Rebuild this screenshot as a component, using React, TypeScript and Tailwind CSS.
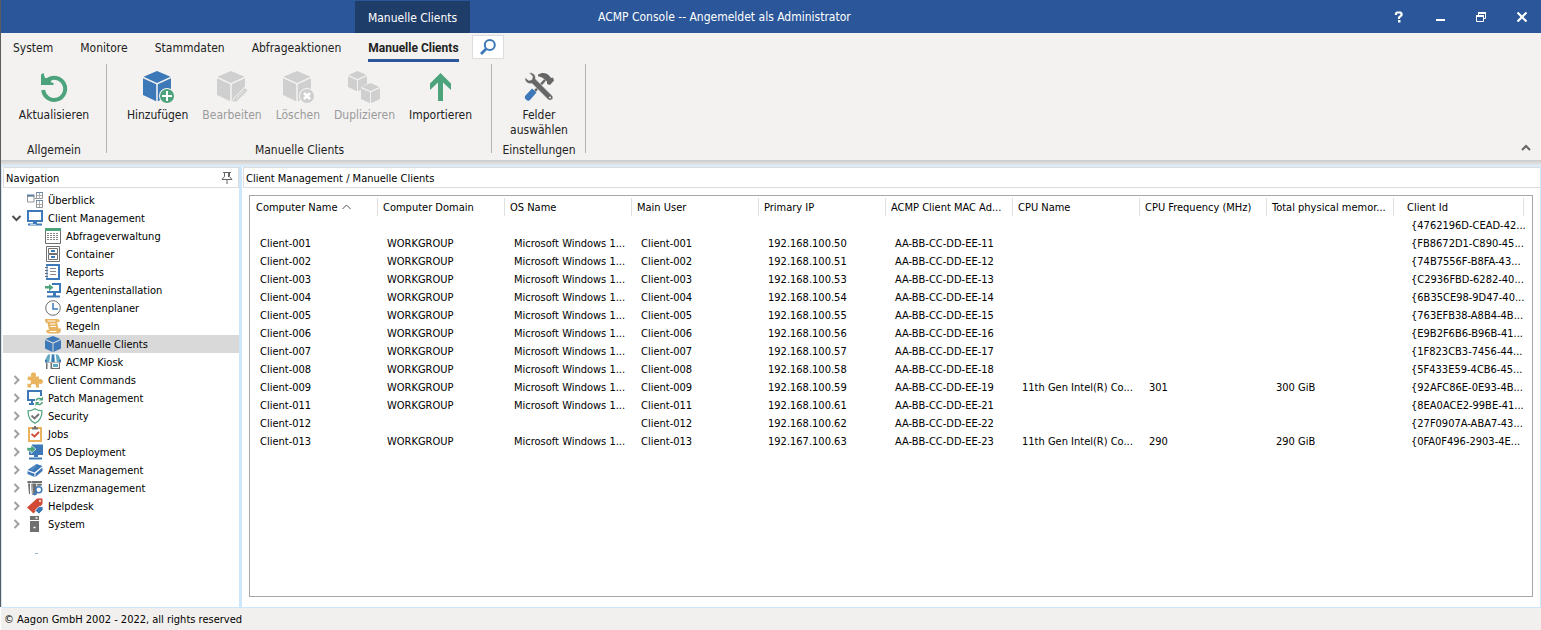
import { useState, type ReactNode } from "react";

const columns = [
  "Computer Name",
  "Computer Domain",
  "OS Name",
  "Main User",
  "Primary IP",
  "ACMP Client MAC Ad...",
  "CPU Name",
  "CPU Frequency (MHz)",
  "Total physical memor...",
  "Client Id",
];

const WG = "WORKGROUP";
const WIN = "Microsoft Windows 1...";
const CPU = "11th Gen Intel(R) Co...";

const clients = [
  ["", "", "", "", "", "", "", "", "", "{4762196D-CEAD-42..."],
  ["Client-001", WG, WIN, "Client-001", "192.168.100.50", "AA-BB-CC-DD-EE-11", "", "", "", "{FB8672D1-C890-45..."],
  ["Client-002", WG, WIN, "Client-002", "192.168.100.51", "AA-BB-CC-DD-EE-12", "", "", "", "{74B7556F-B8FA-43..."],
  ["Client-003", WG, WIN, "Client-003", "192.168.100.53", "AA-BB-CC-DD-EE-13", "", "", "", "{C2936FBD-6282-40..."],
  ["Client-004", WG, WIN, "Client-004", "192.168.100.54", "AA-BB-CC-DD-EE-14", "", "", "", "{6B35CE98-9D47-40..."],
  ["Client-005", WG, WIN, "Client-005", "192.168.100.55", "AA-BB-CC-DD-EE-15", "", "", "", "{763EFB38-A8B4-4B..."],
  ["Client-006", WG, WIN, "Client-006", "192.168.100.56", "AA-BB-CC-DD-EE-16", "", "", "", "{E9B2F6B6-B96B-41..."],
  ["Client-007", WG, WIN, "Client-007", "192.168.100.57", "AA-BB-CC-DD-EE-17", "", "", "", "{1F823CB3-7456-44..."],
  ["Client-008", WG, WIN, "Client-008", "192.168.100.58", "AA-BB-CC-DD-EE-18", "", "", "", "{5F433E59-4CB6-45..."],
  ["Client-009", WG, WIN, "Client-009", "192.168.100.59", "AA-BB-CC-DD-EE-19", CPU, "301", "300 GiB", "{92AFC86E-0E93-4B..."],
  ["Client-011", WG, WIN, "Client-011", "192.168.100.61", "AA-BB-CC-DD-EE-21", "", "", "", "{8EA0ACE2-99BE-41..."],
  ["Client-012", "", "", "Client-012", "192.168.100.62", "AA-BB-CC-DD-EE-22", "", "", "", "{27F0907A-ABA7-43..."],
  ["Client-013", WG, WIN, "Client-013", "192.167.100.63", "AA-BB-CC-DD-EE-23", CPU, "290", "290 GiB", "{0FA0F496-2903-4E..."],
];

const BLUE = "#3d78b8";
const GREEN = "#4ca37c";
const GREY = "#707070";
const SAND = "#e9b35f";
const RED = "#d04a35";

function Svg({ children }: { children: ReactNode }) {
  return (
    <svg viewBox="0 0 16 16" className="h-4 w-4 shrink-0" fill="none">
      {children}
    </svg>
  );
}

function BigSvg({ children }: { children: ReactNode }) {
  return (
    <svg viewBox="0 0 32 32" className="h-8 w-8" fill="none">
      {children}
    </svg>
  );
}

const icons: Record<string, ReactNode> = {
  overview: (
    <Svg>
      <path d="M0.5 4h6.5v6H0.5z" stroke="#8f9499" />
      <path d="M0 3.5h7.5" stroke="#5f7f9f" strokeWidth="2" />
      <path d="M7.5 6.5h2" stroke="#8f9499" />
      <path d="M9.5 0.5h6v6h-6zM9.5 8.5h6v7h-6z" stroke="#8f9499" />
      <path d="M12.5 1v6M9.5 3.5h6M12.5 9v6M9.5 12.5h6" stroke="#a9adb1" />
      <path d="M9 0.5h7M9 8.5h7" stroke="#6d8ba8" />
    </Svg>
  ),
  monitor: (
    <Svg>
      <path d="M1 1h14v10H1z" stroke={BLUE} strokeWidth="2" />
      <path d="M6 12h4v2H6z" fill={BLUE} />
      <path d="M1 14.5h14" stroke={BLUE} strokeWidth="2" />
      <path d="M3 14.5h6" stroke="#b5cce4" />
    </Svg>
  ),
  query: (
    <Svg>
      <path d="M0.5 1h15v14.5H0.5z" stroke={GREY} fill="#fff" />
      <path d="M0 0h16v3H0z" fill={GREEN} />
      <path d="M2 5.5h12M2 7.5h12M2 9.5h12M2 11.5h12" stroke="#858585" strokeDasharray="2 1" />
    </Svg>
  ),
  container: (
    <Svg>
      <path d="M1.5 0.5h13v15h-13z" stroke={GREY} />
      <path d="M3.5 2.500h9v5h-9zM3.5 8.500h9v5h-9z" stroke={GREY} />
      <path d="M6 5h4M6 11h4" stroke={BLUE} strokeWidth="2" />
    </Svg>
  ),
  reports: (
    <Svg>
      <path d="M2 1h12v14H2z" stroke={BLUE} strokeWidth="2" />
      <path d="M0 3.500h3M0 6.500h3M0 9.500h3M0 12.500h3" stroke="#fff" strokeWidth="2" />
      <path d="M0 3.500h3M0 6.500h3M0 9.500h3M0 12.500h3" stroke="#6a6f75" />
      <path d="M5 4.500h6M5 7.500h6M5 10.500h6" stroke="#8a8a8a" />
    </Svg>
  ),
  install: (
    <Svg>
      <path d="M7 2h8v8H3V9" stroke={BLUE} strokeWidth="2" />
      <path d="M8 11h3v3H8z" fill={BLUE} />
      <path d="M2 14.500h13" stroke={BLUE} strokeWidth="2" />
      <path d="M0 4h4V2l4.500 3.500L4 9V6.500H0z" fill={GREEN} />
    </Svg>
  ),
  planner: (
    <Svg>
      <circle cx="8" cy="8" r="7.300" stroke={GREY} fill="#fff" />
      <path d="M8 3v6h5" stroke={BLUE} strokeWidth="1.500" />
    </Svg>
  ),
  rules: (
    <Svg>
      <path d="M0 1h12c2 0 3 1 2.500 3H12l1.500 6.500H16c0 3-1 5-3 5H3.500C1.500 15.500 1 13 1.500 12H4L2.500 5H1C0 4 0 2 0 1z" fill={SAND} />
      <path d="M2.500 3h8M5 6h5.500M5.500 8.500h5.500M4.500 13.500h7" stroke="#fff" />
    </Svg>
  ),
  cube: (
    <Svg>
      <path d="M8 0l7.500 3L8 6.500 0.500 3z" fill={BLUE} />
      <path d="M0 4l7.500 3.500V16L0 12.500zM16 4L8.500 7.500V16l7.500-3.500z" fill={BLUE} />
    </Svg>
  ),
  kiosk: (
    <Svg>
      <path d="M3 0.500h10L16 6v2H0V6z" fill="#63a9c2" />
      <path d="M6 0.500L5 8M10 0.500L11 8" stroke="#fff" strokeWidth="1.500" />
      <path d="M8 0.500V8M1 6v2.500M15 6v2.500" stroke={BLUE} strokeWidth="2" />
      <path d="M1 8.500h14V15H1z" fill={GREY} />
      <path d="M2.500 9h3v6h-3z" fill="#fff" />
      <path d="M7.500 9.500h6v4h-6z" fill="#5aa9c4" stroke="#fff" />
    </Svg>
  ),
  puzzle: (
    <Svg>
      <path
        d="M1 4.500h3.500C3 2 4.500 0.500 6.500 0.500s3.500 1.500 2 4H12v3c2-1 4 0 4 2s-2 3-4 2v4H8.500C10 13.500 8.500 12 6.500 12s-3.500 1.500-2 3.500H0.500v-4c2 1.200 3.500 0 3.500-1.500S2.500 7.500 0.500 8.500z"
        fill={SAND}
      />
    </Svg>
  ),
  patch: (
    <Svg>
      <path d="M8 10H1V1h13v5" stroke={BLUE} strokeWidth="2" />
      <path d="M5 10.500v4M2 14h5" stroke={BLUE} strokeWidth="2" />
      <path d="M9 10.500c1-2.500 4-2.500 5.500-1M15.500 12c-1 3-4 3-5.500 1.500" stroke={GREEN} strokeWidth="1.500" />
      <path d="M16 6.500v4h-4zM8.500 16v-4h4z" fill={GREEN} />
    </Svg>
  ),
  shield: (
    <Svg>
      <path d="M8 0.800c2 1.400 4.500 2 7 2 0 6-1.500 10-7 12.500C2.500 12.800 1 8.800 1 2.800c2.500 0 5-0.600 7-2z" stroke={GREEN} fill="#fff" strokeWidth="1.200" />
      <path d="M4.500 7.500l3 3L12 6" stroke={GREY} strokeWidth="1.800" />
    </Svg>
  ),
  jobs: (
    <Svg>
      <path d="M2 2h12v13H2z" stroke={SAND} strokeWidth="2" fill="#fff" />
      <path d="M5 3.500V1.500h2V0h2v1.500h2v2z" fill={GREY} />
      <path d="M4.500 8l3 2.500L12 6" stroke={RED} strokeWidth="1.800" />
    </Svg>
  ),
  deploy: (
    <Svg>
      <path d="M5 0.500h11v10.500H2V7h3z" fill={BLUE} />
      <path d="M7 11h4v2H7zM2 13.500h13v2H2z" fill={BLUE} />
      <path d="M0 3.500h4V1l5 4.200L4 9.500V7H0z" fill={GREEN} stroke="#fff" strokeWidth="0.600" />
    </Svg>
  ),
  asset: (
    <Svg>
      <path d="M0.500 8L9.500 2 15.500 4 7.500 10.500z" fill={BLUE} />
      <path d="M0.500 9.200L7.500 11.700v3.300L0.500 12zM8.500 11.500L15.500 5.500v3.500L8.500 15z" fill={BLUE} />
      <path d="M4 8l5-4" stroke="#7ba6d3" />
    </Svg>
  ),
  license: (
    <Svg>
      <path d="M0.500 1h14.500v2H0.500zM1 3.500h2V14H2zM4 3.500h5.500V15H5z" fill={GREY} />
      <path d="M4.500 1l1.500 14M10 3.500h5V6h-5z" stroke="#fff" strokeWidth="0.500" fill={GREY} />
      <circle cx="11.800" cy="9.700" r="3" stroke={BLUE} strokeWidth="1.500" fill="#fff" />
      <path d="M9.800 12L7 15" stroke={BLUE} strokeWidth="2" />
    </Svg>
  ),
  helpdesk: (
    <Svg>
      <path d="M10 0.500h5.500V6L6.500 15.500 0 9.500z" fill={RED} />
      <circle cx="13" cy="3" r="1" fill="#fff" />
      <path d="M12 8.500h4V12l-4 4-4-3.500z" fill={BLUE} stroke="#fff" strokeWidth="0.800" />
    </Svg>
  ),
  server: (
    <Svg>
      <path d="M3 0h9v4H3zM3 5h9v11H3z" fill={GREY} />
      <path d="M8.500 2h2M6.500 11.500h2" stroke="#fff" strokeWidth="1.500" />
    </Svg>
  ),
};

const tree = [
  { label: "Überblick", icon: "overview", level: 0 },
  { label: "Client Management", icon: "monitor", level: 0, open: true },
  { label: "Abfrageverwaltung", icon: "query", level: 1 },
  { label: "Container", icon: "container", level: 1 },
  { label: "Reports", icon: "reports", level: 1 },
  { label: "Agenteninstallation", icon: "install", level: 1 },
  { label: "Agentenplaner", icon: "planner", level: 1 },
  { label: "Regeln", icon: "rules", level: 1 },
  { label: "Manuelle Clients", icon: "cube", level: 1 },
  { label: "ACMP Kiosk", icon: "kiosk", level: 1 },
  { label: "Client Commands", icon: "puzzle", level: 0, open: false },
  { label: "Patch Management", icon: "patch", level: 0, open: false },
  { label: "Security", icon: "shield", level: 0, open: false },
  { label: "Jobs", icon: "jobs", level: 0, open: false },
  { label: "OS Deployment", icon: "deploy", level: 0, open: false },
  { label: "Asset Management", icon: "asset", level: 0, open: false },
  { label: "Lizenzmanagement", icon: "license", level: 0, open: false },
  { label: "Helpdesk", icon: "helpdesk", level: 0, open: false },
  { label: "System", icon: "server", level: 0, open: false },
];

function CubeShape({ color }: { color: string }) {
  return (
    <>
      <path d="M15 0l13.500 5.800L15 12 1.500 5.800z" fill={color} />
      <path d="M1 7.200l13.200 6v17L1 24zM29 7.200l-13.200 6v17L29 24z" fill={color} />
    </>
  );
}

function RefreshIcon() {
  return (
    <BigSvg>
      <path d="M9 9.500A11 11 0 1 1 5.200 19" stroke={GREEN} strokeWidth="4" />
      <path d="M3 14V3.500L5.500 2l1.500 5 8.500-0.500-3 4.500 3 1v2z" fill={GREEN} />
    </BigSvg>
  );
}

function AddIcon() {
  return (
    <BigSvg>
      <CubeShape color={BLUE} />
      <circle cx="25" cy="25" r="8" fill="#f3f2f1" />
      <circle cx="25" cy="25" r="7" fill={GREEN} />
      <path d="M25 20v10M20 25h10" stroke="#fff" strokeWidth="2" />
    </BigSvg>
  );
}

function EditIcon() {
  return (
    <BigSvg>
      <CubeShape color="#cfcfcf" />
      <path d="M16 32l1.500-5L29 15.500l4 4L21 31z" fill="#f3f2f1" />
      <path d="M17 31l1.500-4L29 17l2.500 2.500L21 30z" fill="#cfcfcf" />
      <path d="M20 28l8-8" stroke="#f3f2f1" strokeWidth="0.800" />
    </BigSvg>
  );
}

function DeleteIcon() {
  return (
    <BigSvg>
      <CubeShape color="#cfcfcf" />
      <circle cx="25" cy="25" r="8" fill="#f3f2f1" />
      <circle cx="25" cy="25" r="7" fill="#cfcfcf" />
      <path d="M22 22l6 6M28 22l-6 6" stroke="#fff" strokeWidth="2.500" />
    </BigSvg>
  );
}

function DuplicateIcon() {
  return (
    <BigSvg>
      <path d="M9.500 0L18.500 4 9.500 8 0.500 4z" fill="#cfcfcf" />
      <path d="M0 5.200l9 4v11L0 16zM19 5.200l-9 4v11l3-1.400V16l6-3z" fill="#cfcfcf" />
      <path d="M22.500 12L31.500 16l-9 4-9-4z" fill="#cfcfcf" />
      <path d="M13 17.200l9 4v11L13 28zM32 17.200l-9 4v11L32 28z" fill="#cfcfcf" />
    </BigSvg>
  );
}

function ImportIcon() {
  return (
    <BigSvg>
      <path d="M15.500 2L26 12.500V19l-8-7.500V30h-5V11.500L5 19v-6.500z" fill={GREEN} />
    </BigSvg>
  );
}

function ToolsIcon() {
  return (
    <BigSvg>
      <path d="M22 9L12 20" stroke="#666" strokeWidth="2.500" />
      <path d="M15 3.500C19 1 24 1.500 26.500 5l1.500 2 2-0.500 1 3-4 4.500-3-1 0-2.500-3.500-3c-2-1.500-4-2-5.500-2z" fill="#666" />
      <path d="M2.500 24.500l6.500-7 4.500 4-6.500 7.500c-1 1-2.500 1-3.500 0l-1-1c-1-1-1-2.500 0-3.500z" fill={BLUE} />
      <path
        d="M6 2c4-1 7 2 6.500 6L29 24.500c1.500 1.500 1 3 0 4s-3 1-4 0L9 12.500C5 13.500 1.500 10.500 2 6.500l4 3 3-1 0.500-3.500z"
        fill="#666"
        stroke="#f3f2f1"
        strokeWidth="0.600"
      />
      <circle cx="27" cy="26.500" r="1" fill="#f3f2f1" />
    </BigSvg>
  );
}

type Action = { label: string; icon: ReactNode; disabled?: boolean };

function RibbonGroup({ title, actions, width }: { title: string; actions: Action[]; width: string }) {
  return (
    <section aria-label={title} className={`flex ${width} items-start`}>
      <div className="flex h-[94px] flex-1 flex-col items-center justify-between pl-px">
        <div className="flex items-start">
          {actions.map((a) => (
            <button
              key={a.label}
              disabled={a.disabled}
              className="flex flex-col items-center gap-[5px] px-[7px] pt-[7px] leading-[15px] whitespace-pre-line disabled:text-[#9a9a9a]"
            >
              {a.icon}
              <span>{a.label}</span>
            </button>
          ))}
        </div>
        <h2 className="leading-[15px]">{title}</h2>
      </div>
      <div className="h-[89px] w-px bg-[#b5b3b1]" />
    </section>
  );
}

const tabs = ["System", "Monitore", "Stammdaten", "Abfrageaktionen", "Manuelle Clients"];

export default function App() {
  const [selected, setSelected] = useState("Manuelle Clients");
  const [tab, setTab] = useState("Manuelle Clients");

  return (
    <div className="flex min-h-screen flex-col bg-white font-['DejaVu_Sans_Condensed','DejaVu_Sans',sans-serif] text-[11px] leading-4 text-black">
      <div className="flex flex-1 flex-col border-l border-[#5c5c5c]">
        {/* title bar */}
        <header className="flex h-[33px] items-center bg-[#2b579a] text-xs text-white">
          <div className="mt-px ml-[354px] flex h-8 w-[115px] items-center justify-center bg-[#1f3d69]">
            <span className="pt-[2px]">Manuelle Clients</span>
          </div>
          <h1 className="ml-32 flex-1">ACMP Console -- Angemeldet als Administrator</h1>
          <div className="mr-px flex gap-1">
            <button aria-label="Hilfe" className="flex h-8 w-[37px] items-center justify-center">
              <svg viewBox="0 0 10 12" className="h-3 w-[10px]" fill="none">
                <path d="M2 4V2.500L3 1.500h3.500L7.500 2.500v1.800L5 6.500V8" stroke="#fff" strokeWidth="2.200" />
                <path d="M4 9h2.500v2.500H4z" fill="#fff" />
              </svg>
            </button>
            <button aria-label="Minimieren" className="flex h-8 w-[37px] items-center justify-center">
              <svg viewBox="0 0 10 10" className="h-[10px] w-[10px]">
                <path d="M1 7h9v2H1z" fill="#fff" />
              </svg>
            </button>
            <button aria-label="Wiederherstellen" className="flex h-8 w-[37px] items-center justify-center">
              <svg viewBox="0 0 10 10" className="h-[10px] w-[10px]" fill="none" stroke="#fff">
                <path d="M0.500 4v5.500h7V4M2.500 3V1h7v5.500H8" />
                <path d="M0 4h8M2 1h8" strokeWidth="2" />
              </svg>
            </button>
            <button aria-label="Schließen" className="flex h-8 w-[37px] items-center justify-center">
              <svg viewBox="0 0 10 10" className="h-[10px] w-[10px]" fill="none" stroke="#fff" strokeWidth="2.200">
                <path d="M0.500 0.500l9 9M9.500 0.500l-9 9" />
              </svg>
            </button>
          </div>
        </header>

        {/* ribbon */}
        <div className="bg-[#f3f2f1] text-xs text-[#222]">
          <nav className="flex h-[31px] items-start gap-[27px] pl-3">
            {tabs.map((t) => (
              <button
                key={t}
                onClick={() => setTab(t)}
                className={
                  t === tab
                    ? "h-[29px] border-b-[3px] border-[#2b579a] pt-1 font-[Roboto,sans-serif] font-bold"
                    : "h-[29px] border-b-[3px] border-transparent pt-1"
                }
              >
                {t}
              </button>
            ))}
            <button
              aria-label="Suchen"
              className="-ml-[14px] mt-[2px] flex h-6 w-8 items-center justify-center border border-[#dcdcdc] bg-white"
            >
              <svg viewBox="0 0 16 16" className="h-4 w-4" fill="none" stroke={BLUE}>
                <circle cx="9.800" cy="6" r="5" strokeWidth="2" />
                <path d="M6 10l-5 5" strokeWidth="2.800" />
              </svg>
            </button>
          </nav>
          <div className="flex h-24 items-start">
            <RibbonGroup title="Allgemein" width="w-[106px]" actions={[{ label: "Aktualisieren", icon: <RefreshIcon /> }]} />
            <RibbonGroup
              title="Manuelle Clients"
              width="w-[385px]"
              actions={[
                { label: "Hinzufügen", icon: <AddIcon /> },
                { label: "Bearbeiten", icon: <EditIcon />, disabled: true },
                { label: "Löschen", icon: <DeleteIcon />, disabled: true },
                { label: "Duplizieren", icon: <DuplicateIcon />, disabled: true },
                { label: "Importieren", icon: <ImportIcon /> },
              ]}
            />
            <RibbonGroup title="Einstellungen" width="w-[94px]" actions={[{ label: "Felder\nauswählen", icon: <ToolsIcon /> }]} />
            <button aria-label="Menüband ausblenden" className="mr-[10px] ml-auto self-end pb-2">
              <svg viewBox="0 0 10 8" className="h-2 w-[10px]" fill="none">
                <path d="M1 6l4-4 4 4" stroke="#666" strokeWidth="2" />
              </svg>
            </button>
          </div>
        </div>
        <div className="h-[5px] bg-linear-to-b from-[#cbcbcb] to-[#e6e6e6]" />

        <div className="flex flex-1 border-t-2 border-[#d9ecfb]">
          {/* navigation */}
          <aside className="w-[241px] border-r-[3px] border-l border-[#cce6fb]">
            <div className="ml-px flex h-[21px] items-center justify-between border border-[#dcdcdc] pr-[5px] pl-[2px]">
              <h2 className="pt-[2px]">Navigation</h2>
              <button aria-label="Navigation anheften">
                <svg viewBox="0 0 12 12" className="h-3 w-3" fill="none" stroke="#666">
                  <path d="M2 0.500h8M3.500 1v3.500M8.500 1v3.500M7.500 1v4M3.500 4.500l-2.500 3h10l-2.500-3M6 8v4" />
                </svg>
              </button>
            </div>
            <ul className="ml-px pt-[3px]">
              {tree.map((n) => (
                <li key={n.label}>
                  <button
                    onClick={() => setSelected(n.label)}
                    className={`flex h-[18px] w-full items-center gap-[5px] ${n.level ? "pl-[42px]" : "pl-2"} ${
                      selected === n.label ? "bg-[#d9d9d9]" : ""
                    }`}
                  >
                    {n.level === 0 && (
                      <svg viewBox="0 0 11 11" className="h-[11px] w-[11px]" fill="none" strokeWidth="2">
                        {n.open === true && <path d="M1.500 3l4 4 4-4" stroke="#505050" />}
                        {n.open === false && <path d="M3.500 1l4 4-4 4" stroke="#a0a0a0" />}
                      </svg>
                    )}
                    {icons[n.icon]}
                    <span className="pt-[2px]">{n.label}</span>
                  </button>
                </li>
              ))}
            </ul>
            <div className="mt-5 ml-[33px] h-px w-[3px] bg-[#9db8cc]" />
          </aside>

          {/* content */}
          <main className="flex flex-1 flex-col border-r border-[#cce6fb]">
            <h2 className="ml-px flex h-[21px] items-center border border-r-0 border-[#dcdcdc] pt-[2px] pl-[2px]">
              Client Management / Manuelle Clients
            </h2>
            <div className="mt-[7px] mr-[7px] mb-[10px] ml-[7px] flex-1 border border-[#a7a6ab] pr-2">
              <table className="w-full table-fixed border-collapse text-left whitespace-nowrap">
                <colgroup>
                  {columns.map((c, i) => (
                    <col key={c} className={i === 9 ? "w-[131px]" : ""} />
                  ))}
                </colgroup>
                <thead>
                  <tr>
                    {columns.map((c, i) => (
                      <th key={c} scope="col" className="p-0 pt-[2px] font-normal">
                        <div
                          className={`flex h-[18px] items-center gap-2 border-l pt-[2px] ${i === 0 ? "border-transparent" : "border-[#e0e0e0]"} ${
                            i === 9 ? "border-r pl-[13px]" : "pl-[5px]"
                          }`}
                        >
                          {c}
                          {i === 0 && (
                            <svg viewBox="0 0 9 6" className="-ml-1 mb-[2px] h-[6px] w-[9px]" fill="none">
                              <path d="M0.500 5l4-4 4 4" stroke="#555" />
                            </svg>
                          )}
                        </div>
                      </th>
                    ))}
                  </tr>
                </thead>
                <tbody>
                  {clients.map((row) => (
                    <tr key={row[9]} className="h-[18px]">
                      {row.map((cell, i) => (
                        <td key={i} className={i === 9 ? "p-0 pt-[2px] pl-[18px]" : "p-0 pt-[2px] pl-[10px]"}>
                          {cell}
                        </td>
                      ))}
                    </tr>
                  ))}
                </tbody>
              </table>
            </div>
          </main>
        </div>
      </div>

      <footer className="ml-px flex h-[23px] items-center border-t border-[#cce6fb] bg-[#f2f0ee] pt-[2px] pl-[3px]">
        © Aagon GmbH 2002 - 2022, all rights reserved
      </footer>
    </div>
  );
}
